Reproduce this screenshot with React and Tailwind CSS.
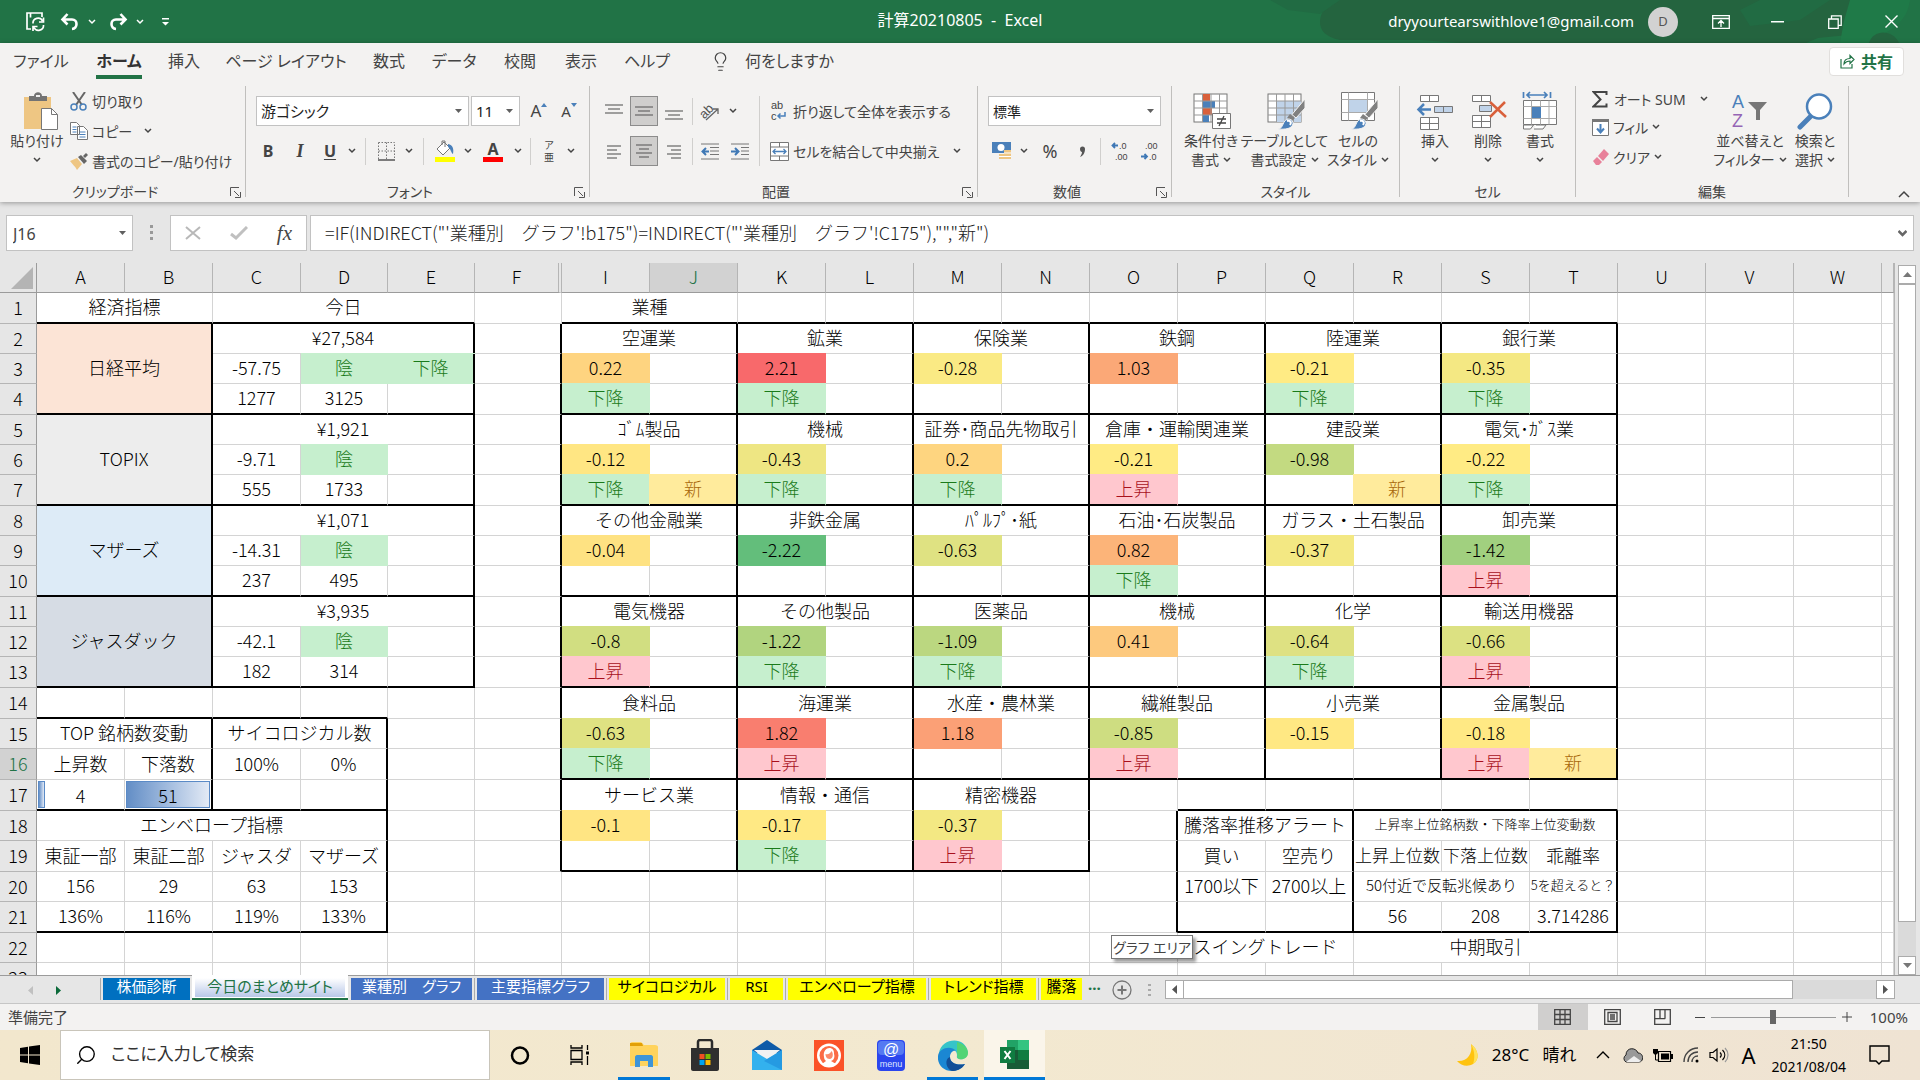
import React from "react";
import { Search, Lightbulb } from "lucide-react";

/* ---------- sheet data ---------- */

const COLS = "A B C D E F I J K L M N O P Q R S T U V W X".split(" ");
const COL_WIDTHS = {
  A: "w-[88px]", B: "w-[88px]", C: "w-[88px]", D: "w-[87px]", E: "w-[87px]", F: "w-[87px]", X: "",
};
const ROW_COUNT = 23;
const TALL_ROWS = new Set([1, 4, 7, 10, 13, 14, 16, 17, 19, 21]);

const UP = { t: "上昇", tone: "up" };
const DOWN = { t: "下降", tone: "down" };
const NEW = { t: "新", tone: "fresh" };
const YIN = { t: "陰", tone: "down" };

const cells = {
  A1: { t: "経済指標", cs: 2 },
  C1: { t: "今日", cs: 3 },
  I1: { t: "業種", cs: 2 },
  A2: { t: "日経平均", cs: 2, rs: 3, tone: "peach" },
  C2: { t: "¥27,584", cs: 3 }, C3: { t: "-57.75" }, D3: YIN, E3: DOWN, C4: { t: "1277" }, D4: { t: "3125" },
  A5: { t: "TOPIX", cs: 2, rs: 3, tone: "silver" },
  C5: { t: "¥1,921", cs: 3 }, C6: { t: "-9.71" }, D6: YIN, C7: { t: "555" }, D7: { t: "1733" },
  A8: { t: "マザーズ", cs: 2, rs: 3, tone: "sky" },
  C8: { t: "¥1,071", cs: 3 }, C9: { t: "-14.31" }, D9: YIN, C10: { t: "237" }, D10: { t: "495" },
  A11: { t: "ジャスダック", cs: 2, rs: 3, tone: "slate" },
  C11: { t: "¥3,935", cs: 3 }, C12: { t: "-42.1" }, D12: YIN, C13: { t: "182" }, D13: { t: "314" },
  A15: { t: "TOP 銘柄数変動", cs: 2 }, C15: { t: "サイコロジカル数", cs: 2 },
  A16: { t: "上昇数" }, B16: { t: "下落数" }, C16: { t: "100%" }, D16: { t: "0%" },
  A17: { t: "4", bar: 4 }, B17: { t: "51", bar: 51 },
  A18: { t: "エンベロープ指標", cs: 4 },
  A19: { t: "東証一部" }, B19: { t: "東証二部" }, C19: { t: "ジャスダ" }, D19: { t: "マザーズ" },
  A20: { t: "156" }, B20: { t: "29" }, C20: { t: "63" }, D20: { t: "153" },
  A21: { t: "136%" }, B21: { t: "116%" }, C21: { t: "119%" }, D21: { t: "133%" },
  P18: { t: "騰落率推移アラート", cs: 2 },
  R18: { t: "上昇率上位銘柄数・下降率上位変動数", cs: 3, size: "text-[13px]" },
  P19: { t: "買い" }, Q19: { t: "空売り" },
  R19: { t: "上昇上位数", size: "text-[17px]" }, S19: { t: "下落上位数", size: "text-[17px]" }, T19: { t: "乖離率" },
  P20: { t: "1700以下" }, Q20: { t: "2700以上" },
  R20: { t: "50付近で反転兆候あり", cs: 2, size: "text-[15px]" }, T20: { t: "5を超えると？", size: "text-[13px]" },
  R21: { t: "56" }, S21: { t: "208" }, T21: { t: "3.714286" },
  P22: { t: "スイングトレード", cs: 2 }, R22: { t: "中期取引", cs: 3 },
};

const industries = [
  [2, [["空運業", 0.22, DOWN], ["鉱業", 2.21, DOWN], ["保険業", -0.28], ["鉄鋼", 1.03], ["陸運業", -0.21, DOWN], ["銀行業", -0.35, DOWN]]],
  [5, [["ｺﾞﾑ製品", -0.12, DOWN, NEW], ["機械", -0.43, DOWN], ["証券･商品先物取引", 0.2, DOWN], ["倉庫・運輸関連業", -0.21, UP], ["建設業", -0.98, null, NEW], ["電気･ｶﾞｽ業", -0.22, DOWN]]],
  [8, [["その他金融業", -0.04], ["非鉄金属", -2.22], ["ﾊﾟﾙﾌﾟ･紙", -0.63], ["石油･石炭製品", 0.82, DOWN], ["ガラス・土石製品", -0.37], ["卸売業", -1.42, UP]]],
  [11, [["電気機器", -0.8, UP], ["その他製品", -1.22, DOWN], ["医薬品", -1.09, DOWN], ["機械", 0.41], ["化学", -0.64, DOWN], ["輸送用機器", -0.66, UP]]],
  [14, [["食料品", -0.63, DOWN], ["海運業", 1.82, UP], ["水産・農林業", 1.18], ["繊維製品", -0.85, UP], ["小売業", -0.15], ["金属製品", -0.18, UP, NEW]]],
  [17, [["サービス業", -0.1], ["情報・通信", -0.17, DOWN], ["精密機器", -0.37, UP]]],
];

/* boxes with a heavy outline: first column, first row, last column, last row */
const boxes = [
  [0, 2, 1, 4], [0, 5, 1, 7], [0, 8, 1, 10], [0, 11, 1, 13],
  [2, 2, 4, 4], [2, 5, 4, 7], [2, 8, 4, 10], [2, 11, 4, 13],
  [0, 15, 1, 17], [2, 15, 3, 17], [0, 18, 3, 21],
  [13, 18, 14, 21], [15, 18, 17, 21],
];

industries.forEach(([row, items]) =>
  items.forEach(([name, value, trend, fresh], i) => {
    const c = 6 + i * 2;
    boxes.push([c, row, c + 1, row + 2]);
    cells[COLS[c] + row] = { t: name, cs: 2 };
    cells[COLS[c] + (row + 1)] = { t: String(value), value };
    if (trend) cells[COLS[c] + (row + 2)] = trend;
    if (fresh) cells[COLS[c + 1] + (row + 2)] = fresh;
  })
);

const heavyRight = new Set();
const heavyBottom = new Set();
boxes.forEach(([c1, r1, c2, r2]) => {
  for (let r = r1; r <= r2; r++) {
    heavyRight.add(c2 + ":" + r);
    if (c1 > 0) heavyRight.add(c1 - 1 + ":" + r);
  }
  for (let c = c1; c <= c2; c++) {
    heavyBottom.add(c + ":" + r2);
    heavyBottom.add(c + ":" + (r1 - 1));
  }
});

const TONES = {
  down: "bg-[#c6efce] text-[#1a7a1a] shadow-[0_-1px_0_#c6efce]",
  up: "bg-[#ffc7ce] text-[#a8101c] shadow-[0_-1px_0_#ffc7ce]",
  fresh: "bg-[#ffeb9c] text-[#a8680a] shadow-[-1px_-1px_0_#ffeb9c]",
  peach: "bg-[#fce4d6]",
  silver: "bg-[#ededed]",
  sky: "bg-[#ddebf7]",
  slate: "bg-[#d6dce4]",
};

/* three-colour scale: green at the minimum, yellow at the median, red at the maximum */
function scaleColour(v) {
  const low = [99, 190, 123], mid = [255, 235, 132], high = [248, 105, 107];
  const median = -0.215;
  const [a, b, t] = v < median ? [mid, low, (median - v) / (median + 2.22)] : [mid, high, (v - median) / (2.21 - median)];
  return `rgb(${a.map((x, i) => Math.round(x + (b[i] - x) * t)).join(",")})`;
}

function buildRows() {
  const covered = new Set();
  const rows = [];
  for (let r = 1; r <= ROW_COUNT; r++) {
    const row = [];
    COLS.forEach((col, c) => {
      if (covered.has(c + ":" + r)) return;
      const cell = cells[col + r] || {};
      const cs = cell.cs || 1, rs = cell.rs || 1;
      for (let y = r; y < r + rs; y++) for (let x = c; x < c + cs; x++) covered.add(x + ":" + y);
      row.push({
        ...cell, key: col + r, cs, rs,
        right: heavyRight.has(c + cs - 1 + ":" + r),
        bottom: heavyBottom.has(c + ":" + (r + rs - 1)),
      });
    });
    rows.push(row);
  }
  return rows;
}
const ROWS = buildRows();

function Cell({ cell }) {
  const filled = cell.tone || cell.value !== undefined;
  const right = cell.right ? "border-r-2 border-r-black" : filled ? "border-r border-r-transparent" : "border-r border-r-[#d4d4d4]";
  const bottom = cell.bottom ? "border-b-2 border-b-black" : filled ? "border-b border-b-transparent" : "border-b border-b-[#d4d4d4]";
  let style;
  if (cell.value !== undefined) {
    const colour = scaleColour(cell.value);
    style = { backgroundColor: colour, boxShadow: `0 -1px 0 ${colour}` };
  }
  return (
    <td colSpan={cell.cs} rowSpan={cell.rs} style={style}
      className={`text-center align-middle whitespace-nowrap ${cell.bar ? "p-0" : "p-0 pb-[3px]"} ${cell.size || ""} ${TONES[cell.tone] || ""} ${right} ${bottom}`}>
      {cell.bar ? (
        <div className="mx-px grid h-[27px] items-center">
          <div className="col-start-1 row-start-1 h-full border border-[#5a8ac6] bg-linear-to-r from-[#638ec6] to-[#e3eaf5]" style={{ width: `${(cell.bar / 51) * 100}%` }} />
          <span className="col-start-1 row-start-1">{cell.t}</span>
        </div>
      ) : cell.t}
    </td>
  );
}

function Sheet() {
  return (
    <table className="w-full table-fixed border-separate border-spacing-0 bg-white font-['Noto_Sans_CJK_JP',sans-serif] text-[18px] leading-6 font-light text-black">
      <colgroup>
        <col className="w-[37px]" />
        {COLS.map((c) => <col key={c} className={COL_WIDTHS[c] ?? "w-[88px]"} />)}
      </colgroup>
      <thead>
        <tr className="h-[30px] bg-[#e6e6e6]">
          <th className="border-r border-b border-[#9b9b9b] p-0 pr-[3px] pb-[3px] text-right align-bottom">
            <svg className="ml-auto" width="22" height="22" viewBox="0 0 22 22"><path d="M22 0V22H0Z" fill="#b4b4b4" /></svg>
          </th>
          {COLS.map((c) => (
            <th key={c} className={`border-b border-b-[#9b9b9b] p-0 pb-[3px] font-light ${c === "F" ? "border-r-4 border-double border-r-[#b5b5b5]" : "border-r border-r-[#b5b5b5]"} ${c === "J" ? "bg-[#d2d2d2] text-[#217346]" : ""}`}>
              {c === "X" ? "" : c}
            </th>
          ))}
        </tr>
      </thead>
      <tbody>
        {ROWS.map((row, i) => (
          <tr key={i} className={TALL_ROWS.has(i + 1) ? "h-[31px]" : "h-[30px]"}>
            <th className={`border-r border-b border-r-[#9b9b9b] border-b-[#b5b5b5] p-0 pb-0.5 font-light ${i === 15 ? "bg-[#d2d2d2] text-[#217346]" : "bg-[#e6e6e6]"}`}>{i + 1}</th>
            {row.map((cell) => <Cell key={cell.key} cell={cell} />)}
          </tr>
        ))}
      </tbody>
    </table>
  );
}

/* ---------- small parts ---------- */

const Chev = ({ className = "" }) => (
  <svg className={`shrink-0 ${className}`} width="8" height="6" viewBox="0 0 8 6" fill="none" stroke="currentColor" strokeWidth="1.5"><path d="M1 1l3 3 3-3" /></svg>
);
const Caret = () => <svg width="7" height="4" viewBox="0 0 7 4" className="shrink-0 text-[#606060]"><path d="M0 0h7L3.500 4z" fill="currentColor" /></svg>;
const Launcher = ({ label }) => (
  <button aria-label={label} className="mr-1">
    <svg width="11" height="11" viewBox="0 0 11 11" fill="none" stroke="#555" strokeWidth="1"><path d="M.5 9V.5H9M4 4l5 5M10.500 5v5.500H5" /></svg>
  </button>
);
const Sep = ({ className = "mx-1" }) => <span className={`h-[27px] w-px shrink-0 bg-[#d0cfcd] ${className}`} />;

function Drop({ label, options, className }) {
  return (
    <label className={`grid h-[30px] items-center border border-[#c2c2c2] bg-white ${className}`}>
      <select aria-label={label} className="col-start-1 row-start-1 h-full w-full appearance-none bg-transparent pl-1 text-[#222] outline-none">
        {options.map((o) => <option key={o}>{o}</option>)}
      </select>
      <span className="pointer-events-none col-start-1 row-start-1 mr-1.5 justify-self-end"><Caret /></span>
    </label>
  );
}

function Tool({ label, className = "w-[30px]", on, children }) {
  return (
    <button aria-label={label} className={`flex h-[30px] shrink-0 items-center justify-center ${on ? "border border-[#8c8c8c] bg-[#cfcecd]" : ""} ${className}`}>{children}</button>
  );
}
const More = ({ label }) => <Tool label={label} className="w-4"><Chev /></Tool>;

function Group({ name, width, launcher, children }) {
  return (
    <section aria-label={name} className={`flex h-[111px] shrink-0 flex-col border-r border-[#c0bfbd] ${width}`}>
      <div className="min-h-0 flex-1">{children}</div>
      <div className="flex h-2.5 items-center">
        <span className="flex-1 text-center leading-5">{name}</span>
        {launcher ? <Launcher label={`${name}の設定`} /> : null}
      </div>
    </section>
  );
}

function Big({ lines, width, children }) {
  return (
    <button className={`flex shrink-0 flex-col items-center leading-[19px] whitespace-nowrap ${width}`}>
      <span className="flex h-[45px] items-end">{children}</span>
      <span>{lines[0]}</span>
      <span className="flex h-[19px] items-center gap-1">{lines[1]}<Chev /></span>
    </button>
  );
}

const Lines = ({ rows, w = 18 }) => (
  <svg width={w} height="17" viewBox="0 0 18 17" stroke="#666" strokeWidth="1.200">
    {rows.map(([x1, x2, y]) => <path key={y} d={`M${x1} ${y}H${x2}`} />)}
  </svg>
);

const GridIcon = ({ children, shade }) => (
  <svg width="40" height="40" viewBox="0 0 40 40" fill="none">
    <rect x="3" y="3" width="33" height="28" fill="#fff" stroke="#777" />
    {shade}
    <path d="M11.500 3v28M20 3v28M28.500 3v28M3 10h33M3 17h33M3 24h33" stroke="#999" />
    {children}
  </svg>
);
const Brush = () => (
  <g>
    <path d="M40 8v9L31 27l-4-3.500z" fill="#808080" stroke="#f3f2f1" />
    <path d="M25 23l5 4-3 3-5-3z" fill="#808080" />
    <path d="M13 38c6 0 4-10 11-10 6 1 5 8-1 9.500-3 .8-7 .8-10 .5z" fill="#4a80ba" stroke="#f3f2f1" />
    <path d="M22 30c3-1 5 1 3 4" stroke="#fff" strokeWidth="2" />
  </g>
);

/* ---------- window parts ---------- */

function TitleBar() {
  return (
    <header className="relative grid h-[43px] shrink-0 grid-cols-[1fr_auto_1fr] items-center overflow-hidden bg-[#217346] text-white">
      <svg className="absolute top-0 right-0" width="660" height="43" viewBox="0 0 660 43">
        <path d="M60 0h530l6 8-14 18 16 8-40 4-12 5H200l-40-3H80C50 34 60 12 70 0z" fill="#24643f" />
        <path d="M10 0h70L60 14 28 10zM500 0h70l-30 20-50 6-10-16z" fill="#216b43" />
        <path d="M590 0h60c-4 30-30 32-40 43h-30l4-22z" fill="#1f7a48" />
        <path d="M609 43c4-14 24-14 30 0z" fill="#24643f" />
      </svg>
      <div className="relative flex items-center pl-[25px]">
        <button aria-label="上書き保存">
          <svg width="21" height="21" viewBox="0 0 21 21" fill="none" stroke="#fff" strokeWidth="1.700"><path d="M6 18H2V2h15v4M5.500 2v4.500" /><path d="M8 12.500a5 5 0 0 1 9.500-2.500M18.500 6.500v4.500H14M18.500 14a5 5 0 0 1-9.500 2.500M8 20v-4.500h4.500" /></svg>
        </button>
        <button aria-label="元に戻す" className="ml-3.5">
          <svg width="20" height="18" viewBox="0 0 20 18" fill="none" stroke="#fff" strokeWidth="2.600"><path d="M2.500 6.500H12c6 0 6 9 0 9.500M7.500 1L2.500 6.500l5 5" /></svg>
        </button>
        <button aria-label="元に戻す履歴" className="ml-2"><Chev /></button>
        <button aria-label="やり直し" className="ml-3">
          <svg width="20" height="18" viewBox="0 0 20 18" fill="none" stroke="#fff" strokeWidth="2.600"><path d="M17.500 6.500H8c-6 0-6 9 0 9.500M12.500 1l5 5.500-5 5" /></svg>
        </button>
        <button aria-label="やり直し履歴" className="ml-2"><Chev /></button>
        <button aria-label="クイック アクセス ツール バーのカスタマイズ" className="ml-[18px]">
          <svg width="7" height="8" viewBox="0 0 7 8"><path d="M0 0h7v1.400H0zM0 4h7L3.500 7.500z" fill="#fff" /></svg>
        </button>
      </div>
      <h1 className="relative pb-1 text-[16px] whitespace-pre">計算20210805  -  Excel</h1>
      <div className="relative flex items-center justify-end">
        <span className="text-[15px]">dryyourtearswithlove1@gmail.com</span>
        <span className="mx-[14px] flex size-[30px] items-center justify-center rounded-full bg-[#d2d2d2] text-[13px] text-[#555]">D</span>
        <button aria-label="リボンの表示オプション" className="flex w-[57px] justify-center">
          <svg width="18" height="14" viewBox="0 0 18 14" fill="none" stroke="#fff" strokeWidth="1.300"><path d="M.7.700h16.600v12.600H.7zM.7 3.500h16.600M9 12V6M6 8.500L9 5.500l3 3" /></svg>
        </button>
        <button aria-label="最小化" className="flex w-[57px] justify-center"><svg width="13" height="2" viewBox="0 0 13 2"><path d="M0 0h13v1.500H0z" fill="#fff" /></svg></button>
        <button aria-label="元に戻す(縮小)" className="flex w-[57px] justify-center"><svg width="14" height="14" viewBox="0 0 14 14" fill="none" stroke="#fff" strokeWidth="1.300"><path d="M.7 4h9.500v9.300H.7zM3.500 4V.8h9.700v9.500h-3" /></svg></button>
        <button aria-label="閉じる" className="flex w-[57px] justify-center"><svg width="13" height="13" viewBox="0 0 13 13" stroke="#fff" strokeWidth="1.400"><path d="M.5.500l12 12M12.500.500l-12 12" /></svg></button>
      </div>
    </header>
  );
}

const MENU = [
  ["ファイル", "w-[82px]"], ["ホーム", "w-[74px]"], ["挿入", "w-14"], ["ページ レイアウト", "w-[148px]"], ["数式", "w-[58px]"],
  ["データ", "w-[72px]"], ["校閲", "w-[60px]"], ["表示", "w-[62px]"], ["ヘルプ", "w-[70px]"],
];

function MenuTabs() {
  return (
    <nav className="flex h-[39px] items-start text-[16px] text-[#444]">
      {MENU.map(([name, w]) => (
        <button key={name} className={`flex h-9 items-center justify-center whitespace-nowrap ${w}`}>
          <span className={`flex h-full items-center border-b-4 pt-1 ${name === "ホーム" ? "border-[#217346] font-bold text-[#333]" : "border-transparent"}`}>{name}</span>
        </button>
      ))}
      <Lightbulb className="mt-2 ml-[28px] text-[#444]" size={21} strokeWidth={1.4} />
      <button className="ml-3.5 h-9">何をしますか</button>
      <button className="mt-1 mr-4 ml-auto flex h-[29px] w-[75px] items-center justify-center gap-1.5 rounded-sm border border-[#e1dfdd] bg-white font-bold text-[#217346]">
        <svg width="15" height="15" viewBox="0 0 15 15" fill="none" stroke="#217346" strokeWidth="1.200"><path d="M1 5v9h11v-4M4 10c0-4 2-5.500 6-5.500V1.500L14 5.500l-4 4V7C7 7 5.500 8 4 10z" /></svg>
        共有
      </button>
    </nav>
  );
}

function Ribbon() {
  return (
    <div className="relative z-10 shrink-0 bg-[#f3f2f1] shadow-[0_1px_5px_rgba(0,0,0,0.35)]">
      <MenuTabs />
      <div className="flex h-[120px] pt-1 text-[14px] text-[#444]">
        <Group name="クリップボード" width="w-[246px]" launcher>
          <div className="flex">
            <Big lines={["貼り付け", ""]} width="w-[74px]">
              <svg className="ml-1.5" width="36" height="39" viewBox="0 0 36 39"><path d="M2 5h27v32H2z" fill="#eec683" /><path d="M7 9V4h5c0-5 8-5 8 0h5v5z" fill="#737373" /><path d="M14 3h4v2h-4z" fill="#eee" /><path d="M19.500 16.500h10l6 6v15h-16z" fill="#fff" stroke="#777" /><path d="M29.500 16.500v6h6" fill="none" stroke="#777" /></svg>
            </Big>
            <div className="-ml-1 flex flex-col">
              <button className="flex h-[30px] items-center gap-1">
                <svg width="18" height="19" viewBox="0 0 18 19" fill="none"><path d="M3 0l9 13M15 0L6 13" stroke="#666" strokeWidth="2" /><circle cx="4" cy="15" r="3" stroke="#4a80ba" strokeWidth="1.500" /><circle cx="13" cy="15" r="3" stroke="#4a80ba" strokeWidth="1.500" /></svg>
                切り取り
              </button>
              <button className="flex h-[30px] items-center gap-1">
                <svg width="18" height="18" viewBox="0 0 18 18" fill="#fff" stroke="#777"><path d="M.5.500h6l3 3v9h-9zM7.500 4.500h6l4 4v9h-10z" /><path d="M2.500 5h4M2.500 7.500h4M2.500 10h4M9.500 10h6M9.500 12.500h6M9.500 15h6" stroke="#4a80ba" /></svg>
                コピー <Chev className="ml-2" />
              </button>
              <button className="flex h-[30px] items-center gap-1 whitespace-nowrap">
                <svg width="18" height="17" viewBox="0 0 18 17"><path d="M0 8l7-3 5 6-5 6c-2-4-5-6-7-9z" fill="#eec683" /><path d="M8 4l3-2 6 6-3 3z" fill="#666" /><path d="M13 3l3-3 2 2-3 3z" fill="#666" /></svg>
                書式のコピー/貼り付け
              </button>
            </div>
          </div>
        </Group>

        <Group name="フォント" width="w-[344px]" launcher>
          <div className="flex flex-col gap-2.5 pt-2.5">
            <div className="flex items-center pl-2.5 text-[15px]">
              <Drop label="フォント名" options={["游ゴシック"]} className="w-[213px]" />
              <Drop label="フォント サイズ" options={["11"]} className="ml-0.5 w-[49px]" />
              <Tool label="フォント サイズの拡大" className="ml-1 w-[30px]"><span className="text-[17px]">A</span><svg className="mb-3" width="6" height="4" viewBox="0 0 6 4"><path d="M0 4h6L3 0z" fill="#4a80ba" /></svg></Tool>
              <Tool label="フォント サイズの縮小" className="w-[30px]"><span className="text-[15px]">A</span><svg className="mb-3" width="6" height="4" viewBox="0 0 6 4"><path d="M0 0h6L3 4z" fill="#4a80ba" /></svg></Tool>
            </div>
            <div className="flex items-center pl-1.5 text-[16px]">
              <Tool label="太字" className="w-8"><b>B</b></Tool>
              <Tool label="斜体" className="w-8"><i className="font-['Liberation_Serif',serif] text-[18px] font-bold">I</i></Tool>
              <Tool label="下線" className="w-7"><b className="underline underline-offset-2">U</b></Tool>
              <More label="下線の種類" />
              <Sep className="mx-[5px]" />
              <Tool label="罫線"><svg width="17" height="19" viewBox="0 0 17 19" fill="none" stroke="#777"><path d="M.5.500h16v17M.5.500v17M8.500.500v17M.5 9h16" strokeDasharray="1.500 1.500" /><path d="M0 18h17" stroke="#555" strokeWidth="1.500" /></svg></Tool>
              <More label="罫線の種類" />
              <Sep className="mx-1.5" />
              <Tool label="塗りつぶしの色"><svg width="22" height="22" viewBox="0 0 22 22"><path d="M3 9l7-7 6 6-7 7z" fill="#fff" stroke="#777" /><path d="M8 5V1h3v6" fill="none" stroke="#777" /><path d="M14 4c5 1 6 5 5 10-2-1-2-5-5-7z" fill="#4a80ba" /><path d="M1 17h20v5H1z" fill="#ff0" /></svg></Tool>
              <More label="塗りつぶしの色の一覧" />
              <Tool label="フォントの色" className="w-[34px]"><span className="border-b-[5px] border-[#f00] px-1 leading-4 font-bold">A</span></Tool>
              <More label="フォントの色の一覧" />
              <Sep />
              <Tool label="ふりがな" className="w-7 flex-col text-[10px] leading-[12px]"><span>ア</span><span>亜</span></Tool>
              <More label="ふりがなの設定" />
            </div>
          </div>
        </Group>

        <Group name="配置" width="w-[388px]" launcher>
          <div className="flex items-start pt-2.5">
            <div className="flex w-[169px] flex-col gap-2.5 pl-2">
              <div className="flex items-center">
                <Tool label="上揃え" className="w-8"><Lines rows={[[0, 18, 2], [3, 15, 6], [0, 18, 10]]} /></Tool>
                <Tool label="上下中央揃え" on className="w-7"><Lines rows={[[0, 18, 4], [3, 15, 8], [0, 18, 12]]} /></Tool>
                <Tool label="下揃え" className="w-8"><Lines rows={[[0, 18, 8], [3, 15, 12], [0, 18, 16]]} /></Tool>
                <Sep className="mx-0.5" />
                <Tool label="方向"><svg className="overflow-visible" width="20" height="19" viewBox="0 0 20 19" fill="none"><text x="-1" y="13" fontSize="13" fontFamily="Liberation Sans" fill="#555" transform="rotate(-45 7 9)">ab</text><path d="M6 18L18 7M13 7h5v5" stroke="#666" strokeWidth="1.300" /></svg></Tool>
                <More label="方向の設定" />
              </div>
              <div className="flex items-center">
                <Tool label="左揃え" className="w-8"><Lines rows={[[2, 16, 3], [2, 12, 7], [2, 16, 11], [2, 12, 15]]} /></Tool>
                <Tool label="中央揃え" on className="w-7"><Lines rows={[[1, 17, 2], [4, 14, 6], [1, 17, 10], [4, 14, 14]]} /></Tool>
                <Tool label="右揃え" className="w-8"><Lines rows={[[2, 16, 3], [6, 16, 7], [2, 16, 11], [6, 16, 15]]} /></Tool>
                <Sep className="mx-0.5" />
                <Tool label="インデントを減らす"><svg width="18" height="17" viewBox="0 0 18 17" stroke="#777"><path d="M0 1h18M9 4.500h9M9 8h9M9 11.500h9M0 16h18" /><path d="M8 8.500H2M5 5L1.500 8.500 5 12" fill="none" stroke="#3f78b5" strokeWidth="2" /></svg></Tool>
                <Tool label="インデントを増やす"><svg width="18" height="17" viewBox="0 0 18 17" stroke="#777"><path d="M0 1h18M10 4.500h8M10 8h8M10 11.500h8M0 16h18" /><path d="M0 8.500h6M4 5l3.500 3.500L4 12" fill="none" stroke="#3f78b5" strokeWidth="2" /></svg></Tool>
              </div>
            </div>
            <div className="flex flex-col gap-2.5 border-l border-[#d0cfcd] pl-2.5">
              <button className="flex h-[30px] items-center gap-1.5 whitespace-nowrap">
                <svg className="overflow-visible" width="17" height="20" viewBox="0 0 17 20" fontFamily="Liberation Sans" fontSize="11" fill="#444"><text x="1" y="8">ab</text><text x="1" y="19">c</text><path d="M15 11v4H8M10.500 12.500L8 15l2.500 2.500" fill="none" stroke="#4a80ba" strokeWidth="1.500" /></svg>
                折り返して全体を表示する
              </button>
              <button className="flex h-[30px] items-center gap-1 whitespace-nowrap">
                <svg width="19" height="19" viewBox="0 0 19 19" fill="#fff" stroke="#777"><path d="M.5.500h18v18H.5zM.5 5h18M.5 14h18M9.500.500V5M9.500 14v4.500" /><path d="M3 9.500h13M5.500 7L3 9.500 5.500 12M13.500 7L16 9.500 13.500 12" fill="none" stroke="#4a80ba" strokeWidth="1.300" /></svg>
                セルを結合して中央揃え <Chev className="ml-2.5" />
              </button>
            </div>
          </div>
        </Group>

        <Group name="数値" width="w-[194px]" launcher>
          <div className="flex flex-col gap-2.5 px-2.5 pt-2.5">
            <Drop label="表示形式" options={["標準"]} className="w-[173px]" />
            <div className="flex items-center">
              <Tool label="通貨表示形式" className="w-7"><svg width="20" height="20" viewBox="0 0 20 20"><path d="M0 1h19v11H0z" fill="#4a80ba" /><circle cx="9" cy="6.500" r="3.500" fill="#fff" /><path d="M12 9h7v9H7v-5h5z" fill="#eec683" /><path d="M7 15.500h12M12 12h7" stroke="#fff" /></svg></Tool>
              <More label="通貨の種類" />
              <Tool label="パーセント スタイル" className="w-9"><span className="text-[18px]">%</span></Tool>
              <Tool label="桁区切りスタイル" className="w-7"><svg width="6" height="11" viewBox="0 0 6 11"><path d="M1 3a2.500 2.500 0 1 1 5 0c0 4-2 7-5 8 1-2 2-3 2-5C2 6 1 5 1 3z" fill="#555" /></svg></Tool>
              <Sep />
              <Tool label="小数点以下の表示桁数を増やす"><svg className="overflow-visible" width="18" height="20" viewBox="0 0 18 20" fill="#444" fontSize="9" fontFamily="Liberation Sans"><text x="8" y="8">.0</text><text x="4" y="19">.00</text><path d="M7 4.500H1.500M4 2L1.500 4.500 4 7" fill="none" stroke="#3f78b5" strokeWidth="1.800" /></svg></Tool>
              <Tool label="小数点以下の表示桁数を減らす"><svg className="overflow-visible" width="18" height="20" viewBox="0 0 18 20" fill="#444" fontSize="9" fontFamily="Liberation Sans"><text x="4" y="8">.00</text><text x="8" y="19">.0</text><path d="M0 15.500h5.500M3.500 13L6 15.500 3.500 18" fill="none" stroke="#3f78b5" strokeWidth="1.800" /></svg></Tool>
            </div>
          </div>
        </Group>

        <Group name="スタイル" width="w-[228px]">
          <div className="flex pl-1">
            <Big lines={["条件付き", "書式"]} width="w-[70px]">
              <GridIcon shade={<g><path d="M12 3h7v7h-7zM12 17h9v7h-9z" fill="#d9603b" /><path d="M12 10h12v7H12zM12 24h6v7h-6z" fill="#4a80ba" /></g>}>
                <path d="M21.500 22.500h18v15h-18z" fill="#fff" stroke="#777" /><path d="M26 28h9M26 32h9M33 25l-5 10" stroke="#444" strokeWidth="1.300" />
              </GridIcon>
            </Big>
            <Big lines={["テーブルとして", "書式設定"]} width="w-[77px]">
              <GridIcon shade={<path d="M11.500 10H36v21H11.500z" fill="#c0d3e9" />}><Brush /></GridIcon>
            </Big>
            <Big lines={["セルの", "スタイル"]} width="w-[70px]">
              <svg width="40" height="40" viewBox="0 0 40 40" fill="none"><path d="M3.500 1.500h33v28h-33z" fill="#fff" stroke="#777" /><path d="M10.500 8.500h19v13h-19z" fill="#c0d3e9" /><path d="M10.500 1.500v28M29.500 1.500v28M3.500 8.500h33M3.500 21.500h33" stroke="#aaa" /><Brush /></svg>
            </Big>
          </div>
        </Group>

        <Group name="セル" width="w-[176px]">
          <div className="flex pl-2">
            <Big lines={["挿入", ""]} width="w-[54px]">
              <svg width="38" height="38" viewBox="0 0 38 38" fill="#fff" stroke="#777"><path d="M4.500 2.500h18v6h-18zM13.500 2.500v6M4.500 24.500h18v12h-18zM13.500 24.500v12M4.500 30.500h18" /><path d="M18.500 13.500h18v6h-18zM27.500 13.500v6" fill="#c0d3e9" /><path d="M15 16.500H3M8 11l-5.500 5.500L8 22" fill="none" stroke="#4a80ba" strokeWidth="2.500" /></svg>
            </Big>
            <Big lines={["削除", ""]} width="w-[52px]">
              <svg width="38" height="38" viewBox="0 0 38 38" fill="#fff" stroke="#777"><path d="M3.500 2.500h18v6h-18zM12.500 2.500v6M3.500 22.500h18v12h-18zM12.500 22.500v12M3.500 28.500h18" /><path d="M10.500 12.500h12v6h-12z" fill="#c0d3e9" /><path d="M21 9l16 15M36 9L21 24" fill="none" stroke="#d9603b" strokeWidth="2.500" /></svg>
            </Big>
            <Big lines={["書式", ""]} width="w-[52px]">
              <svg width="36" height="40" viewBox="0 0 36 40" fill="#fff" stroke="#777"><path d="M1.500 9.500h33v24h-33z" /><path d="M1.500 34h10l-3 4h-7zM14 34h10l-3 4h-9" /><path d="M9.500 9.500v24M18.500 9.500v24M27 9.500v24M1.500 15.500h33M1.500 27.500h33" stroke="#aaa" /><path d="M10 16h9v11h-9z" fill="#4a80ba" stroke="none" /><path d="M1.500 1v6M28.500 1v6M5 4h20M8 1L5 4l3 3M22 1l3 3-3 3" fill="none" stroke="#4a80ba" strokeWidth="1.700" /></svg>
            </Big>
          </div>
        </Group>

        <Group name="編集" width="w-[273px]">
          <div className="flex pl-4">
            <div className="flex w-[120px] flex-col">
              <button className="flex h-[26px] items-center gap-1.5 whitespace-nowrap">
                <svg width="16" height="17" viewBox="0 0 16 17" fill="none" stroke="#444" strokeWidth="2"><path d="M14.500 4V1H1.500l7 7.500-7 7h13v-3" /></svg>
                オート SUM <Chev className="ml-2" />
              </button>
              <button className="flex h-[30px] items-center gap-1">
                <svg width="17" height="17" viewBox="0 0 17 17"><path d="M.5.500h16v16H.5z" fill="#fff" stroke="#777" /><path d="M0 0h17v3H0z" fill="#777" /><path d="M8.500 5v8M5 9.500l3.500 4 3.500-4" fill="none" stroke="#4a80ba" strokeWidth="2" /></svg>
                フィル <Chev />
              </button>
              <button className="flex h-[30px] items-center gap-1">
                <svg width="17" height="16" viewBox="0 0 17 16"><path d="M6 7l6-7 5 5-6 7z" fill="#e8819a" /><path d="M5 8l5 5-3 3H4l-3-4z" fill="#e8819a" /></svg>
                クリア <Chev />
              </button>
            </div>
            <Big lines={["並べ替えと", "フィルター"]} width="w-[76px]">
              <svg className="overflow-visible" width="36" height="38" viewBox="0 0 36 38" fontFamily="Liberation Sans" fontSize="18"><text x="0" y="15" fill="#4a80ba">A</text><text x="0" y="34" fill="#9565b5">Z</text><path d="M16 9h19l-7 8v10h-4V17z" fill="#777" /></svg>
            </Big>
            <Big lines={["検索と", "選択"]} width="w-[54px]">
              <svg width="36" height="38" viewBox="0 0 36 38" fill="#fff" stroke="#4a80ba"><path d="M14 23L3 34" strokeWidth="5" strokeLinecap="round" /><circle cx="22" cy="13.500" r="12" strokeWidth="2.500" /></svg>
            </Big>
          </div>
        </Group>
        <button aria-label="リボンを折りたたむ" className="mr-2.5 mb-1 ml-auto self-end">
          <svg width="12" height="8" viewBox="0 0 12 8" fill="none" stroke="#444" strokeWidth="1.500"><path d="M1 7l5-5 5 5" /></svg>
        </button>
      </div>
    </div>
  );
}

function FormulaBar() {
  return (
    <div className="flex h-[61px] shrink-0 items-start bg-[#e6e6e6] pt-[13px] pr-1.5 pl-1.5">
      <div className="flex h-9 w-[127px] items-center border border-[#c2c2c2] bg-white pr-1.5">
        <input aria-label="名前ボックス" defaultValue="J16" className="min-w-0 flex-1 pt-0.5 pl-1.5 text-[16px] text-[#444] outline-none" />
        <Caret />
      </div>
      <svg className="mx-[17px] mt-2.5 shrink-0" width="3" height="15" viewBox="0 0 3 15" fill="#999"><path d="M0 0h3v3H0zM0 6h3v3H0zM0 12h3v3H0z" /></svg>
      <div className="mr-[3px] flex h-9 w-[137px] shrink-0 items-center justify-between border border-[#c2c2c2] bg-white px-3.5">
        <button aria-label="キャンセル"><svg width="16" height="14" viewBox="0 0 16 14" stroke="#b8b8b8" strokeWidth="2"><path d="M1 1l14 12M15 1L1 13" /></svg></button>
        <button aria-label="入力"><svg width="18" height="14" viewBox="0 0 18 14" fill="none" stroke="#c0c0c0" strokeWidth="3"><path d="M1 8l5 4L17 1" /></svg></button>
        <button aria-label="関数の挿入" className="font-['Liberation_Serif',serif] text-[21px] leading-6 text-[#444] italic">fx</button>
      </div>
      <div className="flex h-9 min-w-0 flex-1 items-center border border-[#c2c2c2] bg-white pr-1.5">
        <input aria-label="数式バー" defaultValue={`=IF(INDIRECT("'業種別　グラフ'!b175")=INDIRECT("'業種別　グラフ'!C175"),"","新")`}
          className="min-w-0 flex-1 pb-0.5 pl-3.5 font-['Noto_Sans_CJK_JP',sans-serif] text-[18px] font-light text-[#222] outline-none [font-feature-settings:normal]" />
        <svg width="9" height="7" viewBox="0 0 9 7" fill="none" stroke="#666" strokeWidth="2.500"><path d="M.5 1l4 4 4-4" /></svg>
      </div>
    </div>
  );
}

function VerticalScroll() {
  return (
    <div className="flex w-[26px] shrink-0 flex-col border-l border-[#b5b5b5] bg-[#e6e6e6] pt-0.5 pr-1 pl-[3px]">
      <button aria-label="上へスクロール" className="flex h-[19px] shrink-0 items-center justify-center border border-[#ababab] bg-white"><svg width="9" height="5" viewBox="0 0 9 5"><path d="M0 5h9L4.500 0z" fill="#777" /></svg></button>
      <div className="flex min-h-0 flex-1 flex-col bg-[#dadada]">
        <div className="h-[95%] border border-[#ababab] bg-white" />
      </div>
      <button aria-label="下へスクロール" className="flex h-[19px] shrink-0 items-center justify-center border border-[#ababab] bg-white"><svg width="9" height="5" viewBox="0 0 9 5"><path d="M0 0h9L4.500 5z" fill="#777" /></svg></button>
    </div>
  );
}

const SHEETS = [
  ["株価診断", "w-[87px] bg-[#0070c0] text-white"],
  ["今日のまとめサイト", ""],
  ["業種別　グラフ", "w-[121px] bg-[#4472c4] text-white"],
  ["主要指標グラフ", "w-[127px] bg-[#4472c4] text-white"],
  ["サイコロジカル", "w-[116px] bg-[#ff0] text-black"],
  ["RSI", "w-[53px] bg-[#ff0] text-black"],
  ["エンベロープ指標", "w-[138px] bg-[#ff0] text-black"],
  ["トレンド指標", "w-[105px] bg-[#ff0] text-black"],
  ["騰落", "w-[41px] bg-[#ff0] text-black"],
];

function SheetTabs() {
  return (
    <div className="flex h-[29px] shrink-0 items-start border-t border-b border-t-[#9b9b9b] border-b-[#c6c6c6] bg-[#e6e6e6] text-[15px] leading-4">
      <button aria-label="前のシート" className="mt-2.5 ml-7"><svg width="5" height="9" viewBox="0 0 5 9"><path d="M5 0v9L0 4.500z" fill="#c0c0c0" /></svg></button>
      <button aria-label="次のシート" className="mt-2.5 mr-[39px] ml-[23px]"><svg width="5" height="9" viewBox="0 0 5 9"><path d="M0 0v9l5-4.500z" fill="#0b6a3a" /></svg></button>
      {SHEETS.map(([name, look], i) =>
        i === 1 ? (
          <button key={name} className="-mt-px h-[25px] w-[156px] shrink-0 border-b-2 border-[#217346] bg-white px-[3px] pt-[3px] pb-px">
            <span className="flex h-full items-start justify-center bg-linear-to-b from-white to-[#b9c8e8] text-[#217346]">{name}</span>
          </button>
        ) : (
          <span key={name} className={`mt-0.5 h-[22px] shrink-0 pr-0.5 ${i === 2 ? "pl-[3px]" : "border-l border-[#ababab] pl-0.5"}`}>
            <button className={`flex h-full items-start justify-center overflow-hidden whitespace-nowrap ${look}`}>{name}</button>
          </span>
        )
      )}
      <span className="ml-1 font-bold text-[#217346]">…</span>
      <button aria-label="新しいシート" className="mt-1 ml-[11px] shrink-0"><svg width="20" height="20" viewBox="0 0 20 20" fill="none" stroke="#777"><circle cx="10" cy="10" r="9" strokeWidth="1.300" /><path d="M10 5.500v9M5.500 10h9" strokeWidth="2" /></svg></button>
      <svg className="mt-2 ml-4 shrink-0" width="3" height="13" viewBox="0 0 3 13" fill="#aaa"><path d="M0 0h3v2H0zM0 5h3v2H0zM0 10h3v2H0z" /></svg>
      <div className="mt-1 mr-[25px] ml-3.5 flex h-[19px] min-w-0 flex-1">
        <button aria-label="左へスクロール" className="flex w-[19px] items-center justify-center border border-[#ababab] bg-white"><svg width="5" height="9" viewBox="0 0 5 9"><path d="M5 0v9L0 4.500z" fill="#555" /></svg></button>
        <div className="flex flex-1 bg-[#dadada]"><div className="w-[88%] border border-l-0 border-[#ababab] bg-white" /></div>
        <button aria-label="右へスクロール" className="flex w-[19px] items-center justify-center border border-[#ababab] bg-white"><svg width="5" height="9" viewBox="0 0 5 9"><path d="M0 0v9l5-4.500z" fill="#555" /></svg></button>
      </div>
    </div>
  );
}

function StatusBar() {
  return (
    <div className="flex h-[26px] shrink-0 items-center bg-[#f3f2f1] text-[15px] text-[#444]">
      <span className="flex-1 pl-2">準備完了</span>
      <button aria-label="標準" className="flex h-full w-[50px] items-center justify-center bg-[#d0cfce]"><svg width="17" height="16" viewBox="0 0 17 16" fill="none" stroke="#444" strokeWidth="1.300"><path d="M.7.700h15.600v14.600H.7zM6 .7v14.600M11 .7v14.600M.7 5.500h15.600M.7 10.500h15.600" /></svg></button>
      <button aria-label="ページ レイアウト" className="flex w-[50px] items-center justify-center"><svg width="17" height="16" viewBox="0 0 17 16" fill="none" stroke="#444" strokeWidth="1.300"><path d="M.7.700h15.600v14.600H.7zM4 3.500h9v9H4zM6 6h5M6 8h5M6 10h5" /></svg></button>
      <button aria-label="改ページ プレビュー" className="flex w-[50px] items-center justify-center"><svg width="17" height="16" viewBox="0 0 17 16" fill="none" stroke="#444" strokeWidth="1.300"><path d="M.7.700h15.600v14.600H.7zM6 .7v9M11 .7v9M.7 9.700h10.500" /></svg></button>
      <button aria-label="縮小" className="ml-[7px] h-px w-2.5 bg-[#444]" />
      <label className="mx-1.5 grid w-[125px] items-center">
        <span className="col-start-1 row-start-1 h-px bg-[#999]" />
        <input type="range" aria-label="ズーム" defaultValue="50" className="col-start-1 row-start-1 h-[15px] w-full appearance-none bg-transparent [&::-webkit-slider-thumb]:h-[14px] [&::-webkit-slider-thumb]:w-[6px] [&::-webkit-slider-thumb]:appearance-none [&::-webkit-slider-thumb]:bg-[#666]" />
      </label>
      <button aria-label="拡大"><svg width="10" height="10" viewBox="0 0 10 10" stroke="#444"><path d="M5 0v10M0 5h10" /></svg></button>
      <button className="mr-3 ml-[18px]">100%</button>
    </div>
  );
}

const apps = [
  ["エクスプローラー", "mr-1 w-[52px]", true,
    <svg width="28" height="26" viewBox="0 0 28 26"><path d="M0 2c0-1 1-2 2-2h9l3 3h11c2 0 3 1 3 2v19H0z" fill="#ffd35c" /><path d="M0 1h12l1 3H0z" fill="#e2a008" /><path d="M5 25V15c0-1 1-2 2-2h14c1 0 2 1 2 2v10h-5v-6h-8v6z" fill="#3e95d8" /></svg>],
  ["Microsoft Store", "w-[62px]", false,
    <svg width="28" height="32" viewBox="0 0 28 32"><path d="M7 9V3c0-1 1-2 2-2h10c1 0 2 1 2 2v6" fill="none" stroke="#2b2b2b" strokeWidth="2.500" /><path d="M0 9h28v21c0 1-1 2-2 2H2c-1 0-2-1-2-2z" fill="#2f2f2f" /><path d="M8.500 15h5v5h-5z" fill="#f25022" /><path d="M14.500 15h5v5h-5z" fill="#7fba00" /><path d="M8.500 21h5v5h-5z" fill="#00a4ef" /><path d="M14.500 21h5v5h-5z" fill="#ffb900" /></svg>],
  ["メール", "w-[62px]", false,
    <svg width="30" height="30" viewBox="0 0 30 30"><path d="M0 10L15 0l15 10v3H0z" fill="#0f5ba8" /><path d="M2 10h26L15 21z" fill="#f2f2f2" /><path d="M0 10l15 9 15-9v20H0z" fill="#33b1ee" /><path d="M30 10L12 21l18 9z" fill="#1f90dd" opacity=".7" /></svg>],
  ["サポート", "w-[62px]", false,
    <svg width="30" height="31" viewBox="0 0 30 31"><path d="M0 0h30v31H0z" fill="#fb5228" /><circle cx="15" cy="15.500" r="12" fill="#fff" /><circle cx="15" cy="15.500" r="9.500" fill="#fb6a45" /><path d="M10 17c-2-11 11-12 10-3 1 3 0 6-3 7l5 3c-4 4-10 4-14 0l4-3c-1-1-2-2-2-4z" fill="#fff" /><path d="M11.500 14c3 1 5-1 6-3 2 2 2 8-2 8-3 0-4-3-4-5z" fill="#fb8a6c" /></svg>],
  ["@メニュー", "w-[62px]", false,
    <svg className="overflow-visible" width="28" height="31" viewBox="0 0 28 31" fontFamily="Liberation Sans"><rect width="28" height="31" rx="4" fill="#2b46ee" /><rect x="1" y="1" width="26" height="14" rx="4" fill="#6f9bf5" opacity=".6" /><text x="14" y="15" textAnchor="middle" fontSize="16" fill="#fff">@</text><text x="14" y="27" textAnchor="middle" fontSize="9" fill="#dfe6ff">menu</text></svg>],
  ["Microsoft Edge", "mr-1.5 ml-[5px] w-[51px]", true,
    <svg width="30" height="31" viewBox="0 0 30 31"><path d="M1 13C3-2 27-5 30 12c0 6-5 8-9 7-3-1-2-2-2-4 0-6-8-8-13-4C3 12 1 15 1 13z" fill="#36c4c9" /><path d="M19 2c8 2 11 7 11 11 0 5-5 7-9 6-3-1-1-3-2-6z" fill="#5ad860" opacity=".8" /><path d="M0 16C1 8 13 5 18 11c-3-1-6 2-6 6 0 6 7 9 15 7-4 6-9 7-13 7C5 31-1 24 0 16z" fill="#1b87d3" /><path d="M12 17c0 6 7 9 15 7-4 6-9 7-13 7-6-2-8-12-2-14z" fill="#134f97" /></svg>],
];

function Taskbar() {
  return (
    <footer className="flex h-[50px] shrink-0 items-stretch bg-linear-to-r from-[#f2e7cd] via-[#f3e9d0] to-[#efe3d3] text-black">
      <button aria-label="スタート" className="flex w-[60px] shrink-0 items-center justify-center"><svg width="20" height="20" viewBox="0 0 20 20"><path d="M0 3l8-1.200V9.500H0zM9 1.600L20 0v9.500H9zM0 10.500h8v7.700L0 17zM9 10.500h11V20L9 18.400z" /></svg></button>
      <label className="flex w-[430px] shrink-0 items-center gap-3.5 border border-[#c9c5ba] bg-white pl-3.5">
        <Search size={22} strokeWidth={1.5} className="-scale-x-100" />
        <input type="search" placeholder="ここに入力して検索" className="min-w-0 flex-1 pb-0.5 text-[17px] outline-none placeholder:text-[#333]" />
      </label>
      <button aria-label="Cortana" className="flex w-[60px] shrink-0 items-center justify-center"><svg width="20" height="21" viewBox="0 0 20 21"><circle cx="10" cy="10.500" r="8" fill="none" stroke="#000" strokeWidth="2.500" /></svg></button>
      <button aria-label="タスク ビュー" className="mr-2 flex w-[60px] shrink-0 items-center justify-center"><svg width="20" height="20" viewBox="0 0 20 20" fill="none" stroke="#000" strokeWidth="1.300"><path d="M1 0v3h11V0M1 5.500h11v9H1zM1 20v-3h11v3M17.500 0v5M17.500 11v9" /><path d="M16 6.500h3v3h-3z" fill="#000" stroke="none" /></svg></button>
      {apps.map(([name, w, open, icon]) => (
        <button key={name} aria-label={name} className={`flex shrink-0 items-center justify-center border-b-[3px] pt-[3px] ${w} ${open ? "border-[#0078d7]" : "border-transparent"}`}>{icon}</button>
      ))}
      <button aria-label="Excel" className="flex w-[61px] shrink-0 items-center justify-center border-b-[3px] border-[#0078d7] bg-[#faf5ea] pt-[3px]">
        <svg width="30" height="30" viewBox="0 0 30 30"><path d="M7 0h22v29H7z" fill="#21a366" /><path d="M18 0h11v10H18z" fill="#33c481" /><path d="M7 10h11v10H7zM18 20h11v9H7v-9z" fill="#185c37" /><path d="M18 10h11v10H18z" fill="#107c41" /><path d="M0 7h15v16H0z" fill="#107c41" /><path d="M4.500 11l6 8M10.500 11l-6 8" stroke="#fff" strokeWidth="2" /></svg>
      </button>
      <div className="ml-auto flex items-center">
        <svg width="24" height="24" viewBox="0 0 24 24"><path d="M15 1c8 6 9 16 2 20-5 3-12 2-16-3 10 1 16-7 14-17z" fill="#ffc30f" /><path d="M15 1c8 6 9 16 2 20 2-5 2-13-2-20z" fill="#ffe25a" /></svg>
        <span className="ml-3 text-[17px] whitespace-pre">28°C   晴れ</span>
        <svg className="ml-5" width="14" height="8" viewBox="0 0 14 8" fill="none" stroke="#000" strokeWidth="1.400"><path d="M1 7l6-6 6 6" /></svg>
        <svg className="ml-3" width="21" height="15" viewBox="0 0 21 15"><path d="M4 14a4 4 0 0 1 0-7c0-8 10-8 12-2 6 0 6 9 1 9z" fill="#999" stroke="#222" /><path d="M4 14l8-6 7 5-2 1z" fill="#eee" /></svg>
        <svg className="ml-2.5" width="20" height="15" viewBox="0 0 20 15"><path d="M5.500 3.500h12v10h-12z" fill="none" stroke="#000" strokeWidth="1.200" /><path d="M8 5.500h8v6H8zM18 6h2v5h-2zM0 1h5v4L3.500 6.500h-2L0 5z" /><path d="M2.500 6v6h3" fill="none" stroke="#000" /></svg>
        <svg className="ml-2.5" width="16" height="16" viewBox="0 0 16 16" fill="none" stroke="#444" strokeWidth="1.400"><path d="M1 15C1 7 7 1 15 1M5 15c0-6 4-10 10-10M9 15c0-3 2-6 6-6" /><circle cx="14" cy="14" r="1.500" fill="#000" stroke="none" /></svg>
        <svg className="ml-2.5" width="20" height="16" viewBox="0 0 20 16" fill="none" stroke="#000" strokeWidth="1.200"><path d="M1 5.500h3L8 2v12l-4-3.500H1zM11 5.500c1.500 1.500 1.500 3.500 0 5M13.500 3c3 3 3 7 0 10" /><path d="M16 1c4 4 4 10 0 14" stroke="#999" /></svg>
        <span className="ml-3 text-[22px]">A</span>
        <time className="ml-4 flex flex-col text-center text-[14px] leading-[23px]"><span>21:50</span><span>2021/08/04</span></time>
        <svg className="mr-[30px] ml-[23px]" width="21" height="21" viewBox="0 0 21 21" fill="none" stroke="#000" strokeWidth="1.400"><path d="M1 1h19v15h-7l-3 3-3-3H1z" /></svg>
      </div>
    </footer>
  );
}

export default function App() {
  return (
    <div className="flex h-screen flex-col overflow-hidden font-['Noto_Sans','Noto_Sans_CJK_JP',sans-serif] [font-feature-settings:'palt']">
      <TitleBar />
      <Ribbon />
      <FormulaBar />
      <main className="relative flex min-h-0 flex-1 overflow-hidden [font-feature-settings:normal]">
        <div className="min-w-0 flex-1 overflow-hidden"><Sheet /></div>
        <VerticalScroll />
        <div role="tooltip" className="absolute top-[672px] left-[1111px] flex h-6 w-[82px] items-center justify-center border border-[#767676] bg-white text-[14px] whitespace-nowrap text-[#444] shadow-[3px_3px_3px_rgba(0,0,0,0.4)] [font-feature-settings:'palt']">グラフ エリア</div>
      </main>
      <SheetTabs />
      <StatusBar />
      <Taskbar />
    </div>
  );
}
